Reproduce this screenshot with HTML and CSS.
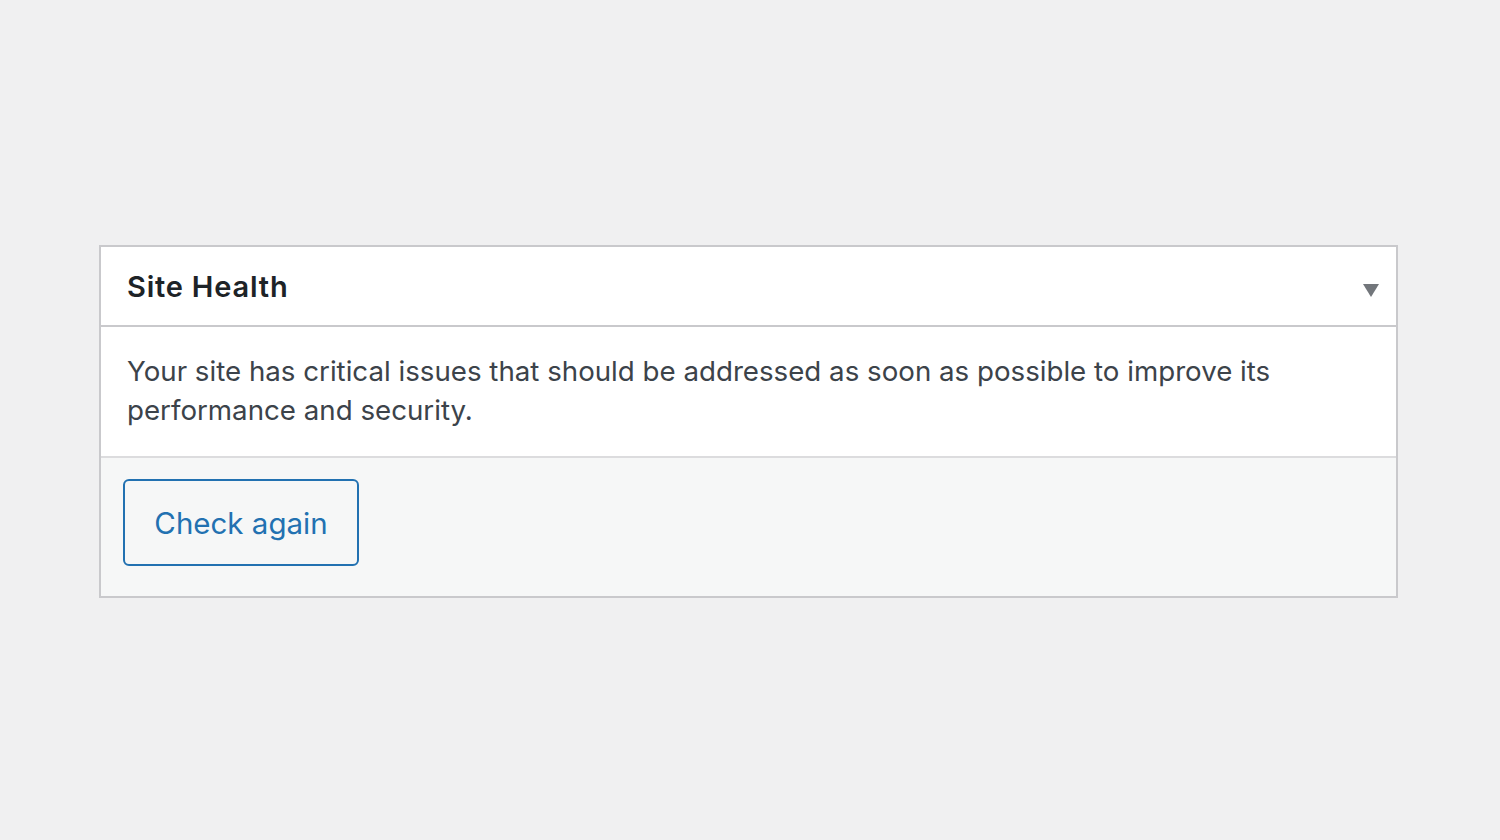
FILE: index.html
```html
<!DOCTYPE html>
<html lang="en">
<head>
<meta charset="utf-8">
<title>Site Health</title>
<link rel="stylesheet" href="styles.css">
</head>
<body>
<div class="card">
  <div class="card-header">
    <h2 class="card-title">Site Health</h2>
    <span class="toggle" aria-hidden="true"></span>
  </div>
  <div class="card-body">
    <p>Your site has critical issues that should be addressed as soon as possible to improve its performance and security.</p>
  </div>
  <div class="card-footer">
    <button class="btn">Check again</button>
  </div>
</div>
</body>
</html>
```
FILE: styles.css
```css
html, body {
  margin: 0;
  padding: 0;
}
body {
  background: #f0f0f1;
  font-family: Inter, "Noto Sans", sans-serif;
  height: 840px;
  overflow: hidden;
}
.card {
  margin: 245px 0 0 99px;
  width: 1299px;
  box-sizing: border-box;
  border: 2px solid #c9c9cc;
  background: #fff;
}
.card-header {
  height: 78px;
  border-bottom: 2px solid #c9c9cc;
  display: flex;
  align-items: center;
  justify-content: space-between;
  padding: 0 17px 0 26px;
}
.card-title {
  margin: 0;
  font-size: 29px;
  font-weight: 600;
  color: #1d2327;
  letter-spacing: 0.8px;
}
.toggle {
  width: 0;
  height: 0;
  border-left: 8.5px solid transparent;
  border-right: 8.5px solid transparent;
  border-top: 13px solid #72767b;
  margin-top: 9px;
}
.card-body {
  padding: 25px 26px 26px;
}
.card-body p {
  margin: 0;
  font-size: 27.7px;
  line-height: 39px;
  color: #3c434a;
}
.card-footer {
  border-top: 2px solid #dcdcde;
  background: #f6f7f7;
  padding: 21px 22px 30px;
}
.btn {
  width: 236px;
  height: 87px;
  border: 2px solid #2271b1;
  border-radius: 6px;
  background: #f6f7f7;
  color: #2271b1;
  font-family: Inter, "Noto Sans", sans-serif;
  font-size: 29.5px;
  padding: 0;
  display: block;
}
```
